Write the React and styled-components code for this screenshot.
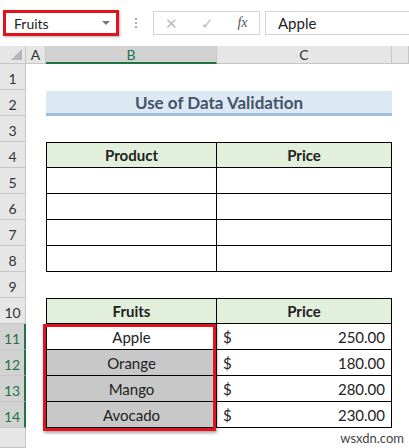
import React from "react";
import styled, { createGlobalStyle } from "styled-components";

const G = createGlobalStyle`
  body { margin: 0; background: #fff; font-family: Lato, "Open Sans", sans-serif; }
`;
const Page = styled.div` width: 409px; height: 448px; overflow: hidden; background:#fff; `;
const Bar = styled.div`
  height: 46px; display: flex; align-items: center; padding-left: 3px; box-sizing: border-box; background: #fff;
`;
const NameBox = styled.div`
  width: 96px; height: 20px; border: 3px solid #e0141e; display: flex; align-items: center;
  justify-content: space-between; padding: 0 6px 0 8px; font-size: 14px; color: #222; box-sizing: content-box;
  box-shadow: 1px 1px 2px rgba(0,0,0,.3);
`;
const Caret = styled.span` width:0;height:0;border-left:4px solid transparent;border-right:4px solid transparent;border-top:4px solid #777; `;
const DotsWrap = styled.div` width: 34px; display:flex; justify-content:center; `;
const Dots = styled.div` width: 0; height: 10px; border-left: 2px dotted #aaa; `;
const Icons = styled.div`
  width: 107px; height: 24px; border: 1px solid #d4d4d4; display:flex; align-items:center; justify-content: space-around;
  color:#bbb; font-size: 15px; box-sizing: border-box;
`;
const Fx = styled.span` color:#555; font-style: italic; font-family: "Liberation Serif", serif; font-size: 14px; `;
const Formula = styled.div`
  flex: 1; margin-left: 5px; height: 24px; border: 1px solid #d4d4d4; border-right: none; display:flex; align-items:center;
  padding-left: 12px; font-size: 15px; color:#222; box-sizing: border-box;
`;
const Sheet = styled.div`
  display: grid; grid-template-columns: 26px 20px 171px 175px 17px;
  grid-template-rows: 18px repeat(14, 26px) 20px;
`;
const Corner = styled.div`
  background:#e6e6e6; border-right:1px solid #c6c6c6; border-bottom:1px solid #c6c6c6; position: relative;
  &::after{content:"";position:absolute;right:3px;bottom:3px;border-left:11px solid transparent;border-bottom:11px solid #b5b5b5;}
`;
const ColHead = styled.div`
  background: ${p => p.$sel ? "#d2d2d2" : "#e6e6e6"}; color: ${p => p.$sel ? "#217346" : "#333"};
  border-right:1px solid #c6c6c6; border-bottom: ${p => p.$sel ? "2px solid #217346" : "1px solid #c6c6c6"};
  display:flex; align-items:center; justify-content:center; font-size: 14px;
`;
const RowHead = styled.div`
  background: ${p => p.$sel ? "#d2d2d2" : "#e6e6e6"}; color: ${p => p.$sel ? "#217346" : "#333"};
  border-bottom:1px solid #c6c6c6; border-right: ${p => p.$sel ? "2px solid #217346" : "1px solid #c6c6c6"};
  display:flex; align-items:flex-end; justify-content:center; padding-bottom: 2px; box-sizing:border-box; font-size: 14px;
`;
const Cell = styled.div`
  grid-column: ${p => p.$col}; grid-row: ${p => p.$row};
  background: ${p => p.$bg || "transparent"};
  border-right: ${p => p.$b ? "1px solid #000" : "none"};
  border-bottom: ${p => p.$b ? "1px solid #000" : "none"};
  border-left: ${p => p.$bl ? "1px solid #000" : "none"};
  border-top: ${p => p.$bt ? "1px solid #000" : "none"};
  font-weight: ${p => p.$bold ? 700 : 400}; color: #222; font-size: 15px;
  display:flex; align-items:center; justify-content: ${p => p.$j || "center"}; padding: 0 6px; box-sizing: border-box;
`;
const Title = styled.div`
  grid-column: 3 / 5; grid-row: 3; background:#dce9f5; border-bottom: 3px solid #9fbfdf;
  color:#44546a; font-weight:700; font-size:17px; display:flex; align-items:center; justify-content:center;
  margin-top: 1px;
`;
const RedBox = styled.div`
  grid-column: 3; grid-row: 12 / 16; border: 3px solid #e0141e; margin: 0 1px -3px -3px; pointer-events:none;
  box-shadow: 1px 2px 3px rgba(0,0,0,.35); z-index: 2;
`;
const Mark = styled.div`
  grid-column: 4 / 6; grid-row: 16; color:#444; font-size: 13px; text-align:right; padding-right: 5px; align-self:center;
`;

const fruits = [["Apple","250.00"],["Orange","180.00"],["Mango","280.00"],["Avocado","230.00"]];

export default function App() {
  const rows = Array.from({ length: 14 }, (_, i) => i + 1);
  return (
    <Page>
      <G />
      <Bar>
        <NameBox>Fruits<Caret /></NameBox>
        <DotsWrap><Dots /></DotsWrap>
        <Icons><span>✕</span><span>✓</span><Fx>fx</Fx></Icons>
        <Formula>Apple</Formula>
      </Bar>
      <Sheet>
        <Corner />
        <ColHead>A</ColHead>
        <ColHead $sel>B</ColHead>
        <ColHead>C</ColHead>
        <ColHead />
        {rows.map(r => (
          <RowHead key={r} $sel={r >= 11} style={{ gridColumn: 1, gridRow: r + 1 }}>{r}</RowHead>
        ))}
        <RowHead style={{ gridColumn: 1, gridRow: 16 }} />
        <Title>Use of Data Validation</Title>
        <Cell $col={3} $row={5} $b $bl $bt $bold $bg="#e2efda">Product</Cell>
        <Cell $col={4} $row={5} $b $bt $bold $bg="#e2efda">Price</Cell>
        {[6,7,8,9].map(r => (
          <React.Fragment key={r}>
            <Cell $col={3} $row={r} $b $bl />
            <Cell $col={4} $row={r} $b />
          </React.Fragment>
        ))}
        <Cell $col={3} $row={11} $b $bl $bt $bold $bg="#e2efda">Fruits</Cell>
        <Cell $col={4} $row={11} $b $bt $bold $bg="#e2efda">Price</Cell>
        {fruits.map(([f, p], i) => (
          <React.Fragment key={f}>
            <Cell $col={3} $row={12 + i} $b $bl $bg={i === 0 ? "#fff" : "#c8c8c8"}>{f}</Cell>
            <Cell $col={4} $row={12 + i} $b $j="space-between"><span>$</span><span>{p}</span></Cell>
          </React.Fragment>
        ))}
        <RedBox />
        <Mark>wsxdn.com</Mark>
      </Sheet>
    </Page>
  );
}
